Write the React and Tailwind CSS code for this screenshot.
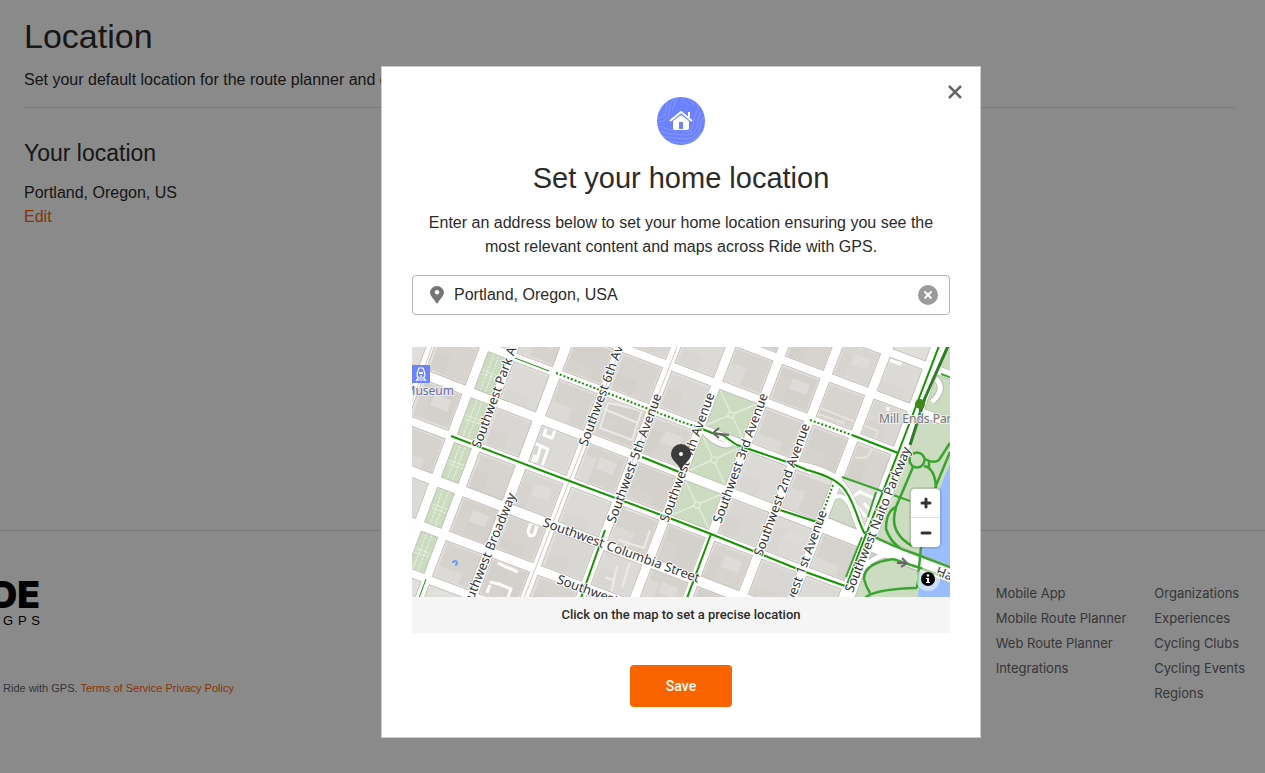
import React, { useState } from 'react';

// Avenues run SSW, streets run ESE. Each one is [x1, y1, x2, y2].
const avenues = [
  { line: [29, -30, -40, 160], width: 7 },
  { line: [84, -30, -20, 248], width: 9 },
  { line: [114, -30, -2, 276], width: 8 },
  { line: [165, -30, 50, 276], width: 10 },
  { line: [219, -30, 103, 276], width: 8 },
  { line: [275, -30, 159, 276], width: 9 },
  { line: [330, -30, 213, 276], width: 9 },
  { line: [383, -30, 266, 276], width: 9 },
  { line: [437, -30, 320, 276], width: 9 },
  { line: [488, -30, 371, 276], width: 9 },
  { line: [538, -30, 425, 276], width: 15 },
];

const streets = [
  { line: [-20, -179, 560, 36], width: 8 },
  { line: [-20, -135, 530, 73], width: 8 },
  { line: [-20, -87, 490, 107], width: 8 },
  { line: [-20, -37, 400, 124], width: 8 },
  { line: [-20, 15, 455, 198], width: 9 },
  { line: [-20, 67, 436, 240], width: 8 },
  { line: [-20, 117, 360, 262], width: 10 },
  { line: [-20, 168, 230, 262], width: 9 },
  { line: [-20, 219, 140, 279], width: 8 },
];

const buildingColors = ['#d6d3cf', '#d9d7d4', '#d4d1cd', '#dbdad7', '#d7d4d0'];

const labels = [
  { text: 'Southwest Park Avenue', x: 68, y: 102, angle: -70 },
  { text: 'Southwest 6th Avenue', x: 175, y: 100, angle: -70 },
  { text: 'Southwest 5th Avenue', x: 203, y: 177, angle: -70 },
  { text: 'Southwest 4th Avenue', x: 256, y: 176, angle: -70 },
  { text: 'Southwest 3rd Avenue', x: 309, y: 177, angle: -70 },
  { text: 'Southwest 2nd Avenue', x: 350, y: 210, angle: -70 },
  { text: 'Southwest 1st Avenue', x: 415, y: 165, angle: -70, anchor: 'end' },
  { text: 'Southwest Naito Parkway', x: 499, y: 102, angle: -68, anchor: 'end' },
  { text: 'Southwest Broadway', x: 104, y: 148, angle: -68, anchor: 'end' },
  { text: 'Southwest Columbia Street', x: 130, y: 179, angle: 20 },
  { text: 'Southwest Clay Street', x: 144, y: 236, angle: 20 },
  { text: 'Hawthorne Bridge', x: 523, y: 228, angle: 20 },
];

const intersect = (a, b) => {
  const [x1, y1, x2, y2] = a;
  const [x3, y3, x4, y4] = b;
  const d = (x1 - x2) * (y3 - y4) - (y1 - y2) * (x3 - x4);
  const p = x1 * y2 - y1 * x2;
  const q = x3 * y4 - y3 * x4;
  return [(p * (x3 - x4) - (x1 - x2) * q) / d, (p * (y3 - y4) - (y1 - y2) * q) / d];
};

// Point inside a block, u along the street and v along the avenue (0..1)
const inBlock = (c, u, v) =>
  [0, 1].map((i) => {
    const top = c[0][i] + (c[1][i] - c[0][i]) * u;
    const bottom = c[3][i] + (c[2][i] - c[3][i]) * u;
    return Math.round(top + (bottom - top) * v);
  });

const rect = (c, u1, v1, u2, v2) =>
  [inBlock(c, u1, v1), inBlock(c, u2, v1), inBlock(c, u2, v2), inBlock(c, u1, v2)]
    .map((p) => p.join(','))
    .join(' ');

const getBlocks = () => {
  const blocks = [];
  for (let a = 0; a < avenues.length - 1; a++) {
    for (let s = 0; s < streets.length - 1; s++) {
      const corners = [
        intersect(avenues[a].line, streets[s].line),
        intersect(avenues[a + 1].line, streets[s].line),
        intersect(avenues[a + 1].line, streets[s + 1].line),
        intersect(avenues[a].line, streets[s + 1].line),
      ];
      const isPark = a === 1 || (a === 6 && s >= 2 && s <= 4);
      blocks.push({ key: `${a}-${s}`, a, s, corners, isPark });
    }
  }
  return blocks;
};

const Block = ({ block }) => {
  const { a, s, corners, isPark } = block;
  if (isPark) {
    const square = a === 6;
    return (
      <g>
        <polygon points={rect(corners, 0, 0, 1, 1)} fill="#cbdcc0" />
        {square ? (
          <g stroke="#e3ebda" strokeWidth="1.5" fill="none">
            <polyline points={[inBlock(corners, 0.1, 0.1), inBlock(corners, 0.9, 0.9)].join(' ')} />
            <polyline points={[inBlock(corners, 0.9, 0.1), inBlock(corners, 0.1, 0.9)].join(' ')} />
            <circle cx={inBlock(corners, 0.5, 0.5)[0]} cy={inBlock(corners, 0.5, 0.5)[1]} r="3" fill="#cbdcc0" />
          </g>
        ) : (
          <g stroke="#edf2e8" strokeWidth="1" strokeDasharray="3 1" fill="none">
            <polyline points={[inBlock(corners, 0.4, 0.1), inBlock(corners, 0.4, 0.9)].join(' ')} />
            <polyline points={[inBlock(corners, 0.6, 0.1), inBlock(corners, 0.6, 0.9)].join(' ')} />
            <polyline points={[inBlock(corners, 0.1, 0.48), inBlock(corners, 0.9, 0.48)].join(' ')} />
            <polyline points={[inBlock(corners, 0.1, 0.56), inBlock(corners, 0.9, 0.56)].join(' ')} />
          </g>
        )}
      </g>
    );
  }
  const n = a * 7 + s * 3;
  const split = 0.35 + (n % 4) * 0.1;
  return (
    <g>
      <polygon points={rect(corners, 0.14, 0.14, 0.88, 0.87)} fill={buildingColors[n % 5]} />
      <polygon points={rect(corners, 0.14, split, split, 0.87)} fill={buildingColors[(n + 3) % 5]} />
      {n % 4 === 0 && <polygon points={rect(corners, 0.4, 0.3, 0.75, 0.55)} fill="#dddcd9" />}
    </g>
  );
};

const MapDrawing = () => (
  <svg
    className="block h-full w-full"
    viewBox="0 0 538 250"
    preserveAspectRatio="xMidYMid slice"
    fontFamily="'Noto Sans', sans-serif"
    role="img"
    aria-label="Map of downtown Portland"
  >
    <rect width="538" height="250" fill="#e0dfdc" />
    {getBlocks().map((block) => (
      <Block key={block.key} block={block} />
    ))}

    {/* Plazas and parking lanes */}
    <g fill="none" stroke="#fff" strokeWidth="3" strokeLinejoin="round">
      <path d="M134 82l-2 6 8 3 3-8M122 96l7 3-5 16M129 99l7 3-6 17M123 108l-3 9" />
      <path d="M118 178l4-3 3 4-3 9-4 1-2-4z" />
      <path d="M78 235l9 2 12 5-3 8M78 238l-3 8M86 216l6 3 14 6" />
      <path d="M478 13l10 4 2-4M476 60v4" />
    </g>
    <g fill="none" stroke="#ebeae7" strokeWidth="2">
      <path d="M20 24l32 16M30 40l10-8M196 56l-8 25 32 12 10-30zM192 62l34 14" />
      <path d="M214 162l26 8 6-4M206 193l26 8 6-18" />
      <path d="M205 219l-6 28M193 230l10 4M218 215l-8 26" />
    </g>
    <path d="M406 60l60 24-8 22q-3 7-15 4M406 67l26 9" fill="none" stroke="#e8e3d8" strokeWidth="2" />

    {/* Riverfront park and river */}
    <path d="M532 -2L486 126 438 252H540V-2Z" fill="#cbdcc0" />
    <path d="M540 114l-7 14-5 13-6 24-12 35-4 52h40z" fill="#99bdff" />
    <path d="M523 31q12 10-3 24" fill="none" stroke="#bdb9b2" strokeWidth="7" />
    <path d="M523 31q12 10-3 24" fill="none" stroke="#fff" strokeWidth="5" />
    <path d="M428 129l58 20-34 40q-4-40-24-60z" fill="#e0dfdc" />
    <path d="M440 150l8-5 14 6M444 158l10 12M462 168l-10-12" fill="none" stroke="#fff" strokeWidth="3" />
    <path d="M427 148l-15 26 34 12q-4-12-8-24-3-12-11-14z" fill="#d0dac8" />

    {/* Road casings, then fills */}
    <g stroke="#bdb9b2">
      {[...streets, ...avenues].map(({ line: [x1, y1, x2, y2], width }, i) => (
        <line key={i} x1={x1} y1={y1} x2={x2} y2={y2} strokeWidth={width + 1.5} />
      ))}
    </g>
    <g fill="none" stroke="#bdb9b2">
      <path d="M380 117q42 6 52 24c12 14 14 36 22 50" strokeWidth="8" />
      <path d="M413 178l42 17 45 18 45 17" strokeWidth="17" />
      <path d="M411 171q4-21 16-22 10 1 16 23l6 16" strokeWidth="5" />
      <path d="M441 246q4-34 40-40M290 82q10 14 24 16 6 0 8-6" strokeWidth="7" />
    </g>
    <g stroke="#fff">
      {[...streets, ...avenues].map(({ line: [x1, y1, x2, y2], width }, i) => (
        <line key={i} x1={x1} y1={y1} x2={x2} y2={y2} strokeWidth={width} />
      ))}
    </g>
    <g fill="none" stroke="#fff">
      <path d="M380 117q42 6 52 24c12 14 14 36 22 50" strokeWidth="7" />
      <path d="M413 178l42 17 45 18 45 17" strokeWidth="15" />
      <path d="M411 171q4-21 16-22 10 1 16 23l6 16" strokeWidth="4" />
      <path d="M441 246q4-34 40-40M290 82q10 14 24 16 6 0 8-6" strokeWidth="5" />
    </g>
    <path d="M209 0L112 251M265 0L219 118M20 0L-2 60" fill="none" stroke="#cfc8bf" strokeWidth="1" />

    {/* Cycle routes */}
    <g fill="none" stroke="#159600" strokeWidth="2">
      <path d="M39 89l89 34 140 52 31 12 89 36 48 17" />
      <path d="M230 110l37 15M368 163l43 14M440 88l46 18" />
      <path d="M288 81l12 5 11 2q9 7 14 10l53 18 17 7q32 8 40 23c9 14 12 32 18 41" />
      <path d="M193 183l-24 68M299 187l-24 64" />
      <path d="M527 -1L488 101 455 185 434 240" />
      <path d="M14 232l-7 19M103 11l34 13" strokeWidth="1" />
    </g>
    <g fill="none" stroke="#159600" strokeWidth="2" strokeDasharray="2 2">
      <path d="M144 26l126 49 18 6M398 73l42 15M421 138l-10 27" />
    </g>
    <path d="M536 -1l-23 52-15 47" fill="none" stroke="#2d7c26" strokeWidth="3" />
    <g fill="none" stroke="#39a42e" strokeWidth="2.5">
      <circle cx="505" cy="113" r="7.5" />
      <path d="M513 112q8 5 14 1l11-17M512 119q11 2 12 22M538 105l-15 36M517 113v8" />
      <path d="M501 120l-17 40q-10 4-10 22 4 12 14 19M484 161q-8 24 16 38" />
      <path d="M453 185q26 14 53 23l34 13M481 212l27 9 32 12M509 200l-4 41" />
      <path d="M481 212q-29 4-29 20 2 8 6 14M452 252q8-10 53-11" />
      <path d="M430 130l68 24M529 27l11 4M464 145l-8 25M450 190l-16 40" strokeWidth="2" />
    </g>
    <g fill="none" stroke="#666" strokeWidth="2">
      <path d="M317 88l-16-2M307 81l-6 5 6 5M485 216h9M490 211l5 5-6 4" />
    </g>
    <circle cx="508" cy="57" r="5" fill="#43881e" />
    <path d="M508 58v8" stroke="#43881e" strokeWidth="2" />
    <path d="M41 216a2 2 0 1 1 2 2" fill="none" stroke="#6f9cf5" strokeWidth="2" />

    {/* Labels */}
    <g fontSize="13" fill="#353535" stroke="#fff" strokeWidth="2" strokeLinejoin="round" paintOrder="stroke">
      {labels.map(({ text, x, y, angle, anchor }) => (
        <text key={text} textAnchor={anchor || 'start'} transform={`translate(${x} ${y}) rotate(${angle})`}>
          {text}
        </text>
      ))}
    </g>
    <g fontSize="12" stroke="#eeedea" strokeWidth="2" paintOrder="stroke">
      <text x="42" y="48" textAnchor="end" fill="#656cab">Museum</text>
      <text x="467" y="76" fill="#777">Mill Ends Park</text>
    </g>

    {/* Station badge */}
    <rect x="0" y="18" width="18" height="18" rx="1" fill="#6b83fb" />
    <path d="M7 21h4q2 4 2 8l-2 2H7l-2-2q0-4 2-8zM6 31l-2 3M12 31l2 3M5 33h8" fill="none" stroke="#fff" strokeWidth="1.2" />
    <path d="M7 25h4v2H7z" fill="#fff" />
    <circle cx="9" cy="29" r="1" fill="#fff" />

    {/* Home pin */}
    <path d="M269 124c-2-8-10-10-10-17a10 10 0 0 1 20 0c0 7-8 9-10 17z" fill="#3b3b3b" />
    <circle cx="269" cy="107" r="2" fill="#fff" />
  </svg>
);

const HomeBadge = () => (
  <svg className="h-12 w-12" viewBox="0 0 48 48" aria-hidden="true">
    <clipPath id="badge">
      <circle cx="24" cy="24" r="24" />
    </clipPath>
    <circle cx="24" cy="24" r="24" fill="#6b82fc" />
    <g clipPath="url(#badge)" fill="none" stroke="#9aaafd" strokeWidth="0.6">
      <path d="M0 21c6 0 9-2 9-8s2-9 5-14M0 25c9 0 12-5 12-11S15 5 18 0M5 10c-1 4-3 5-6 6M20 0c-3 6-2 9-5 13M26 0c-1 4 3 6 6 8M31 0c1 4 5 5 6 8" />
      <path d="M0 30c5-2 8 2 13 3s9-2 14 1 8-1 9-6 1-9 4-14 0-9-4-12" />
      <path d="M0 34c5-1 9 3 14 3s10 0 14 1 11-3 12-9 1-10 4-14" />
      <path d="M3 39c5 0 8 2 13 2s9 1 14 1 12-6 13-12 2-8 6-13M8 44c6-1 12 2 18 2s15-5 18-11" />
    </g>
    <path d="M13 24l11-9 11 9M32 20v-5" fill="none" stroke="#fff" strokeWidth="2" />
    <path fill="#fff" fillRule="evenodd" d="M16 24l8-6 8 6v7q0 2-2 2H18q-2 0-2-2zM22 25v7h4v-7z" />
  </svg>
);

const FooterLinks = ({ items }) => (
  <ul className="font-[Inter,sans-serif] text-[13px] leading-[25px] text-[#666666]">
    {items.map((item) => (
      <li key={item}>
        <a href="#">{item}</a>
      </li>
    ))}
  </ul>
);

const LocationPage = () => (
  <div className="flex min-h-screen flex-col overflow-hidden bg-white text-[#2b2b2b]">
    <main className="h-[530px] pt-4 pr-[31px] pl-6">
      <h1 className="text-[34px] leading-10">Location</h1>
      <p className="mt-3 border-b border-[#dddddd] pb-[15px] leading-6">
        Set your default location for the route planner and other features.
      </p>
      <h2 className="mt-[29px] text-[23px] leading-8">Your location</h2>
      <p className="mt-3 leading-6">Portland, Oregon, US</p>
      <a href="#" className="block leading-6 text-[#fa6400]">Edit</a>
    </main>
    <footer className="flex grow justify-between border-t border-[#dddddd] pt-[50px] pr-5">
      <div>
        <div className="flex w-10 flex-col items-end">
          <div className="h-7 font-[Inter] text-[37px] leading-7 font-black text-black">RIDE</div>
          <div className="mt-1 flex w-full justify-between pl-[3px] text-[13px] leading-4 text-black">
            <span>G</span>
            <span>P</span>
            <span>S</span>
          </div>
        </div>
        <p className="mt-[51px] pl-[3px] text-[11px] leading-4 whitespace-nowrap text-[#666666]">
          Ride with GPS.{' '}
          <a href="#" className="text-[#fa6400]">Terms of Service</a>{' '}
          <a href="#" className="text-[#fa6400]">Privacy Policy</a>
        </p>
      </div>
      <div className="flex gap-7">
        <FooterLinks items={['Mobile App', 'Mobile Route Planner', 'Web Route Planner', 'Integrations']} />
        <FooterLinks items={['Organizations', 'Experiences', 'Cycling Clubs', 'Cycling Events', 'Regions']} />
      </div>
    </footer>
  </div>
);

const App = () => {
  const [address, setAddress] = useState('Portland, Oregon, USA');

  return (
    <div className="font-['Liberation_Sans',sans-serif] text-[16px]">
      <LocationPage />
      <div className="fixed inset-0 flex items-start justify-center overflow-hidden bg-black/46 pt-[66px] pl-[97px]">
        <div
          role="dialog"
          aria-modal="true"
          aria-labelledby="dialog-title"
          className="relative flex w-[600px] flex-col items-center border border-[#cccccc] bg-white px-[30px] py-[30px] text-[#2b2b2b]"
        >
          <button aria-label="Close" className="absolute top-[17px] right-[17px]">
            <svg className="h-4 w-4" viewBox="0 0 16 16" fill="none" stroke="#666" strokeWidth="2.5">
              <path d="M2 2l12 12M14 2L2 14" />
            </svg>
          </button>
          <HomeBadge />
          <h2 id="dialog-title" className="mt-[13px] text-[29px] leading-10">Set your home location</h2>
          <p className="mt-[13px] text-center leading-6">
            Enter an address below to set your home location ensuring you see the most relevant content and maps across Ride with GPS.
          </p>
          <div className="mt-4 flex h-10 w-full items-center rounded border border-[#b5b5b5] pr-[11px] pl-4">
            <svg className="h-[18px] w-4" viewBox="0 0 16 18" aria-hidden="true">
              <path
                fill="#757575"
                fillRule="evenodd"
                d="M8 18C5 13 1 10 1 6.500a7 6.500 0 0 1 14 0C15 10 11 13 8 18zM8 4a2.300 2.300 0 1 0 0 4.600A2.300 2.300 0 0 0 8 4z"
              />
            </svg>
            <input
              aria-label="Address"
              className="ml-[9px] min-w-0 grow outline-none"
              value={address}
              onChange={(e) => setAddress(e.target.value)}
            />
            <button aria-label="Clear address" onClick={() => setAddress('')}>
              <svg className="h-5 w-5" viewBox="0 0 20 20" aria-hidden="true">
                <circle cx="10" cy="10" r="10" fill="#9a9a9a" />
                <path d="M6.500 6.500l7 7M13.500 6.500l-7 7" stroke="#fff" strokeWidth="2" />
              </svg>
            </button>
          </div>
          <div className="relative mt-8 h-[250px] w-full overflow-hidden">
            <MapDrawing />
            <div className="absolute right-[10px] bottom-[50px] flex w-[29px] flex-col divide-y divide-[#dddddd] rounded bg-white shadow-[0_0_0_2px_rgba(0,0,0,0.1)]">
              <button aria-label="Zoom in" className="flex h-[29px] items-center justify-center">
                <svg className="h-3 w-3" viewBox="0 0 12 12" stroke="#333" strokeWidth="3" strokeLinecap="round">
                  <path d="M2 6h8M6 2v8" />
                </svg>
              </button>
              <button aria-label="Zoom out" className="flex h-[29px] items-center justify-center">
                <svg className="h-3 w-3" viewBox="0 0 12 12" stroke="#333" strokeWidth="3" strokeLinecap="round">
                  <path d="M2 6h8" />
                </svg>
              </button>
            </div>
            <button
              aria-label="Map attribution"
              className="absolute right-[10px] bottom-[6px] flex h-6 w-6 items-center justify-center rounded-full bg-white/50"
            >
              <svg className="h-[14px] w-[14px]" viewBox="0 0 14 14" aria-hidden="true">
                <circle cx="7" cy="7" r="7" />
                <circle cx="7" cy="3.500" r="1.300" fill="#fff" />
                <path d="M5 6h3v4h1v1H5v-1h1V7H5z" fill="#fff" />
              </svg>
            </button>
          </div>
          <p className="w-full bg-[#f5f5f5] text-center font-[Roboto,sans-serif] text-[13px] leading-9 font-medium">
            Click on the map to set a precise location
          </p>
          <button className="mt-8 h-[42px] rounded bg-[#fa6400] px-9 font-[Roboto,sans-serif] text-[14px] font-medium text-white">
            Save
          </button>
        </div>
      </div>
    </div>
  );
};

export default App;
